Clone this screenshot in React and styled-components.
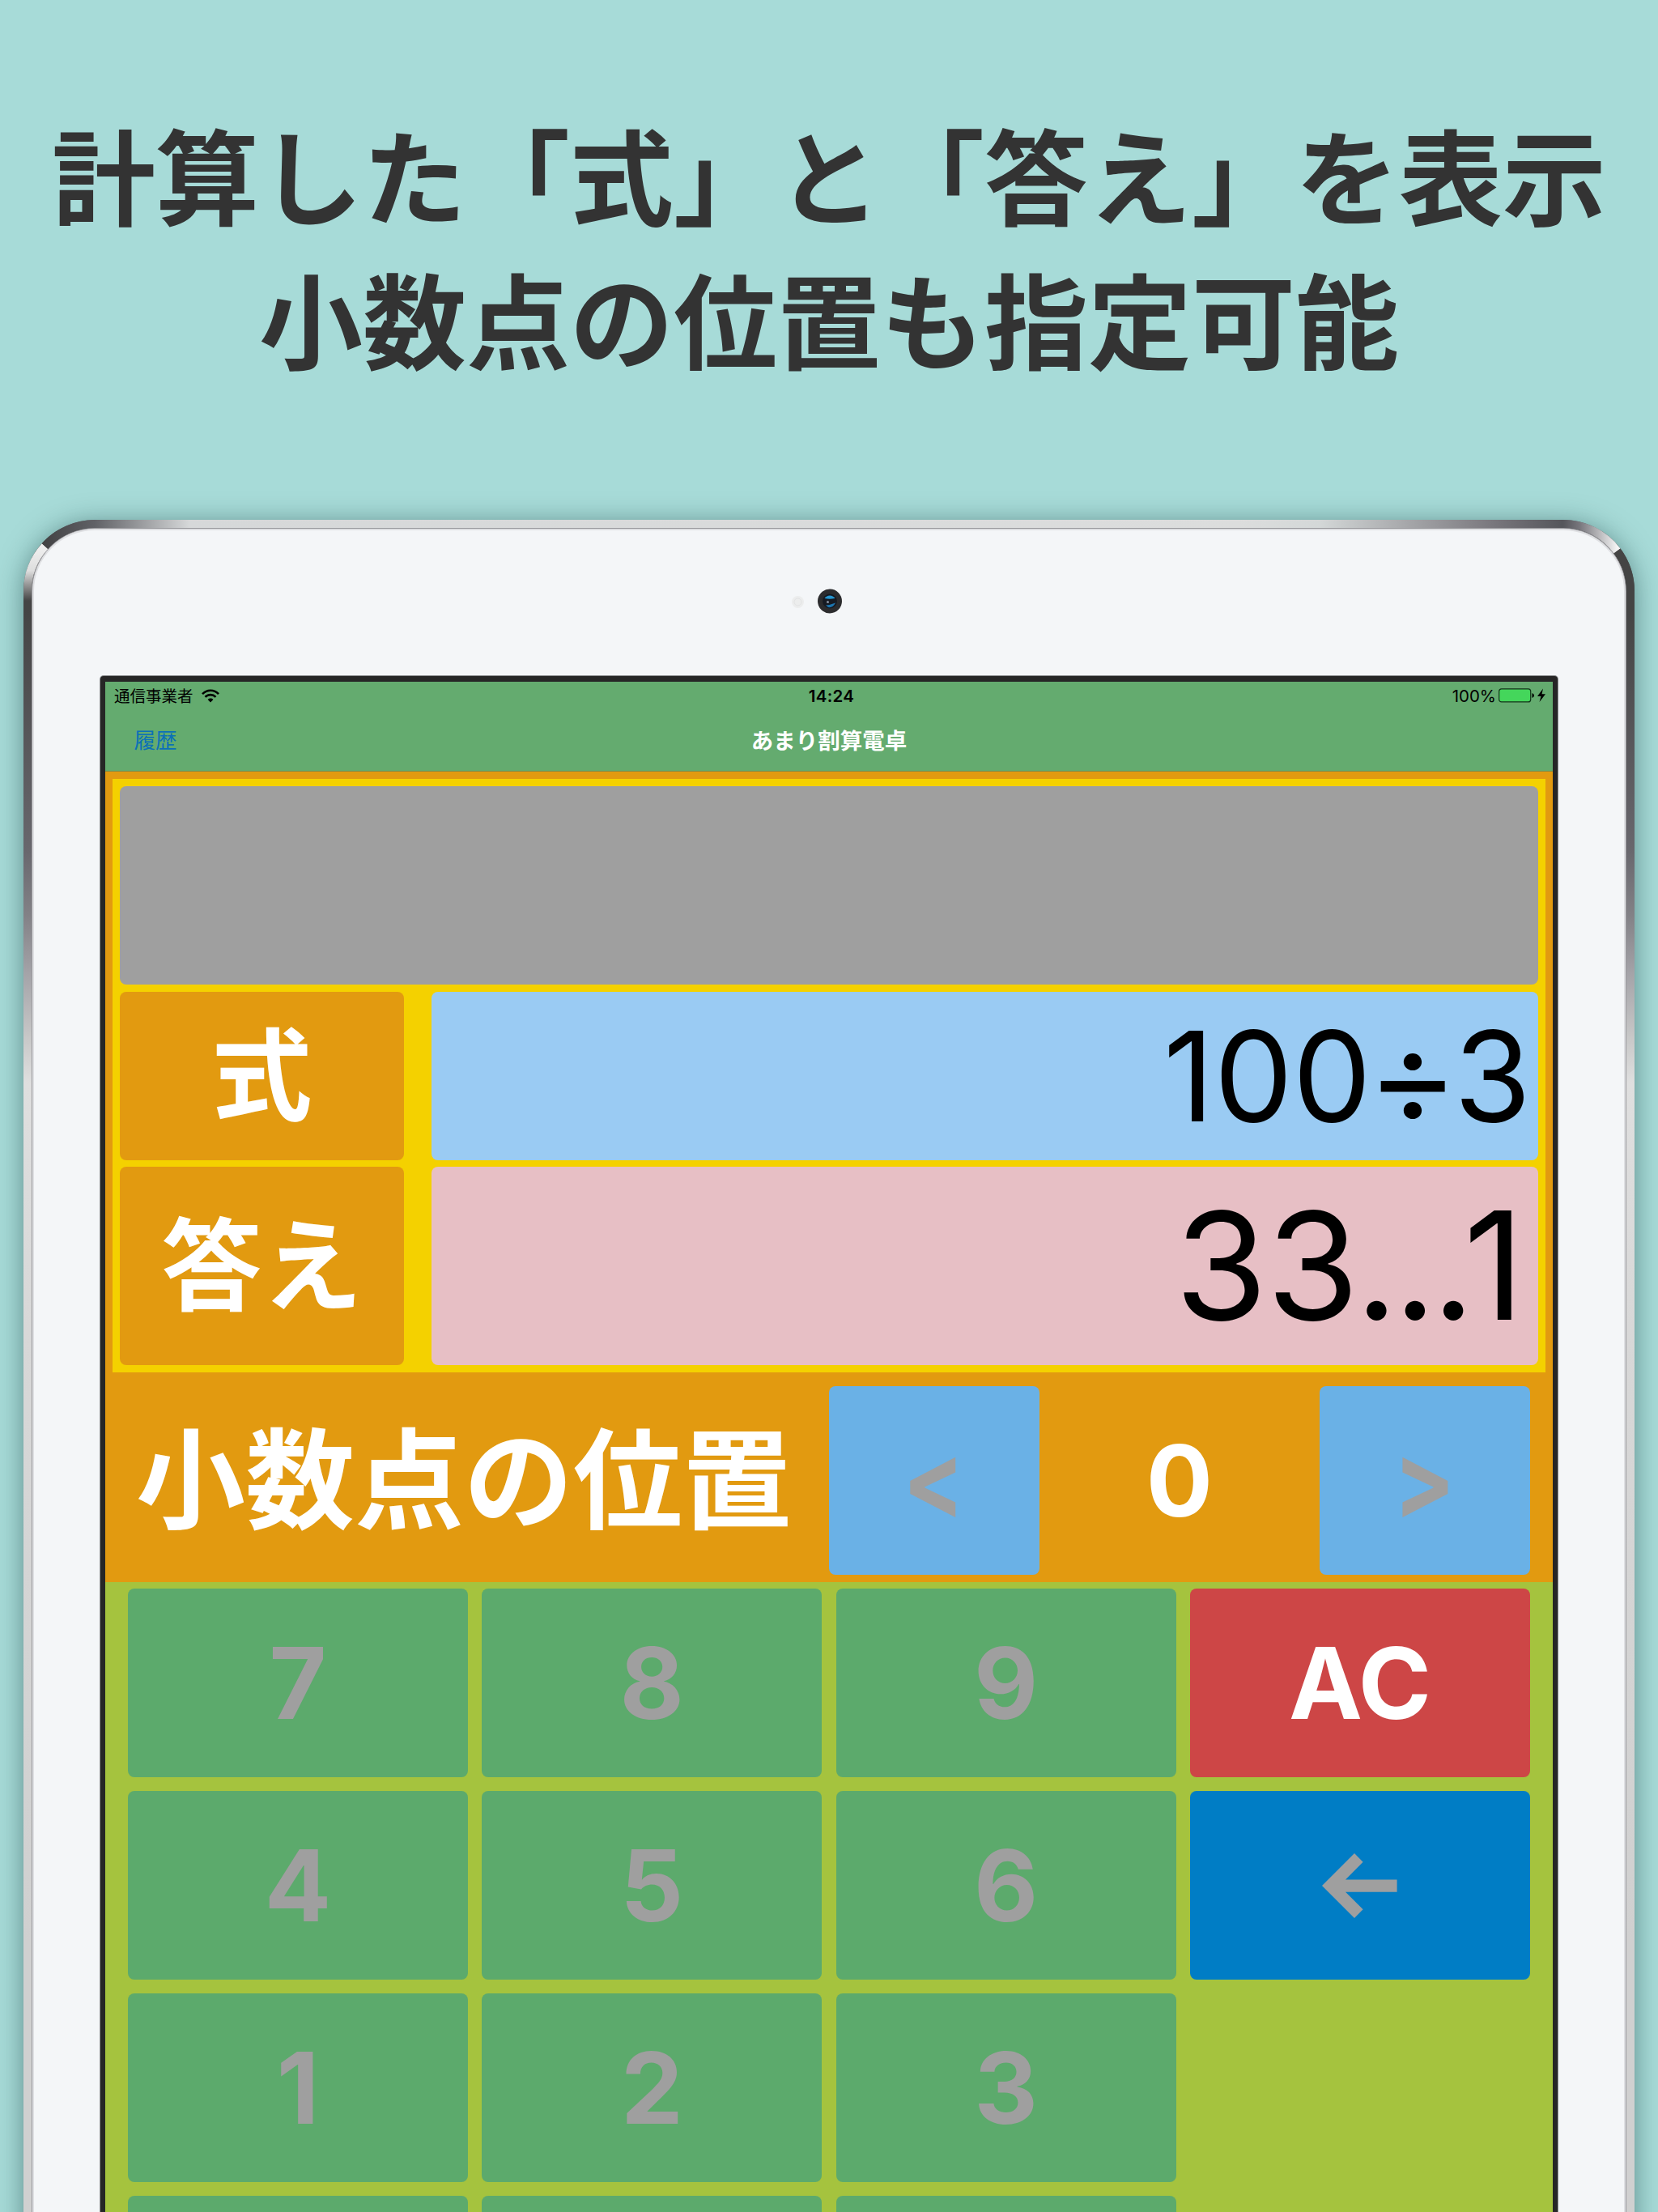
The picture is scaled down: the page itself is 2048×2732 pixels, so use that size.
import React from "react";
import styled, { createGlobalStyle } from "styled-components";

const Global = createGlobalStyle`
  * { box-sizing: border-box; }
  body { margin: 0; background: #a7dbd8; }
`;

const latin = `Inter, "Noto Sans CJK JP", sans-serif`;
const japanese = `"Noto Sans CJK JP", Inter, sans-serif`;

const Page = styled.main`
  width: 2048px;
  height: 2732px;
  overflow: hidden;
  background: #a7dbd8;
  font-family: ${latin};
  display: flex;
  flex-direction: column;
  align-items: center;
`;

const Headline = styled.h1`
  margin: 0;
  height: 642px;
  flex: none;
  padding-top: 125px;
  font: 700 128px/178px ${japanese};
  color: #333;
  text-align: center;
  white-space: nowrap;
`;

const Tablet = styled.section`
  position: relative;
  flex: none;
  width: 1990px;
  height: 2250px;
  padding: 10px 10px 0;
  border-radius: 88px 88px 0 0;
  background:
    linear-gradient(90deg, #606166 88px, #d6d8d9 205px, #dcdddd 1500px, #d4d8d8 1600px, #77757b 1820px, #55565b 1900px) 0 0 / 100% 12px no-repeat,
    linear-gradient(180deg, #444 0, #444 110px, #68676d 408px, #838287 490px, #a4a3a8 560px, #c8c8c8 640px, #dfdfdf 695px, #d8d8d8 1000px, #d0d0d0 1760px);
  box-shadow: 0 4px 32px rgba(20, 60, 60, 0.5);
`;

const Glass = styled.div`
  height: 100%;
  padding: 180px 82px 0;
  border: 1px solid #97979b;
  border-width: 1px 1px 0;
  border-radius: 78px 78px 0 0;
  background: #f4f6f8;
  box-shadow: inset 0 0 0 2px #dfe0e3;
`;

const Hardware = styled.svg`
  position: absolute;
  left: 0;
  top: 0;
  pointer-events: none;
`;

const Screen = styled.div`
  height: 2100px;
  margin: 2px 2px 0;
  border: 6px solid #262626;
  border-top-width: 7px;
  border-radius: 4px 4px 0 0;
  background: #a5c33e;
  box-shadow: 0 0 0 1px #8c8e90;
`;

const TopBar = styled.header`
  height: 111px;
  background: #64ab6f;
  border-bottom: 1px solid #7d8a4a;
`;

const StatusBar = styled.div`
  height: 34px;
  padding: 0 7px 0 11px;
  display: grid;
  grid-template-columns: 1fr auto 1fr;
  align-items: center;
  font-size: 20.5px;
  color: #000;
`;

const Carrier = styled.div`
  display: flex;
  align-items: center;
  gap: 10px;
  font: 400 19.5px/30px ${japanese};
`;

const Clock = styled.div`
  font-weight: 600;
  letter-spacing: 0.3px;
  transform: translateX(1px);
`;

const Power = styled.div`
  display: flex;
  align-items: center;
  justify-content: flex-end;
  gap: 3px;
`;

const NavBar = styled.nav`
  height: 73px;
  padding: 0 35.5px;
  display: grid;
  grid-template-columns: 1fr auto 1fr;
  align-items: center;
  font: 400 26.5px/60px ${japanese};
  color: #0b70b8;
`;

const NavTitle = styled.h2`
  margin: 0;
  font: 700 27.5px/60px ${japanese};
  color: #fff;
`;

const Display = styled.div`
  height: 742px;
  padding: 9px;
  background: #f4d100;
  border: 9px solid #e29a10;
  border-bottom: 0;
  display: grid;
  grid-template-columns: 351px 1fr;
  grid-template-rows: 245px 208px 245px;
  column-gap: 34px;
  row-gap: 8.5px;
`;

const Panel = styled.div`
  grid-column: ${(p) => (p.$wide ? "1 / -1" : "auto")};
  border-radius: 8px;
  background: ${(p) => p.$bg};
  display: flex;
  align-items: center;
  justify-content: center;
  color: #fff;
  font: 700 124px/1 ${japanese};
`;

const Caption = styled(Panel)`
  padding-bottom: 17px;
`;

const Value = styled(Panel)`
  justify-content: flex-end;
  padding-right: ${(p) => p.$inset}px;
  color: #000;
  font: 400 ${(p) => p.$size}px/1 ${latin};
  letter-spacing: ${(p) => p.$track}px;
`;

const Operator = styled.span`
  margin: 0 1px 0 -1px;
  transform: translateX(1px) scale(1.12, 1.06);
`;

const Dots = styled.span`
  margin: 0 -8px 0 -4px;
  letter-spacing: -6px;
`;

const DecimalRow = styled.div`
  height: 259px;
  padding: 17px 28px 9px 38px;
  background: #e29a10;
  display: grid;
  grid-template-columns: 856px 260px 1fr 260px;
  align-items: stretch;
  color: #fff;
`;

const DecimalLabel = styled.div`
  display: flex;
  align-items: center;
  padding-bottom: 18px;
  font: 700 135px/1 ${japanese};
  white-space: nowrap;
`;

const DecimalValue = styled.div`
  display: flex;
  align-items: center;
  justify-content: center;
  font-size: 122px;
  font-weight: 700;
`;

const Key = styled.button`
  border: 0;
  padding: 0;
  border-radius: 8px;
  display: flex;
  align-items: center;
  justify-content: center;
  background: ${(p) => p.$bg || "#5caa6c"};
  color: ${(p) => p.$fg || "#9f9f9f"};
  font: 700 122px/1 ${latin};
`;

const Chevron = styled.span`
  transform: translate(-1px, -2px) scale(0.92, 1.08);
`;

const Keypad = styled.div`
  padding: 8.4px 28px 0;
  display: grid;
  grid-template-columns: repeat(4, 420px);
  grid-auto-rows: 232.5px;
  column-gap: 17.33px;
  row-gap: 17.5px;
`;

const Wifi = () => (
  <svg width="22" height="17" viewBox="0 0 22 17" fill="none" stroke="#000" strokeWidth="2.6">
    <path d="M1 6.2C6.5.2 15.500.2 21 6.2" />
    <path d="M4.500 9.900C8.200 6.200 13.800 6.200 17.500 9.900" />
    <path d="M7.600 12.900C9.600 11 12.400 11 14.400 12.900L11 16.600Z" fill="#000" stroke="none" />
  </svg>
);

const Battery = () => (
  <svg width="60" height="18" viewBox="0 0 60 18">
    <rect x=".7" y=".9" width="39" height="16" rx="3" fill="#44d65b" stroke="#12351a" strokeWidth="1.200" />
    <path d="M41.500 6Q44 7 44 9T41.500 12Z" />
    <path d="M55 .500L48 10H52.500L50.500 17L58 7.300H53.500Z" />
  </svg>
);

const Camera = () => (
  <Hardware width="1990" height="200" viewBox="0 0 1990 200">
    <circle cx="956.500" cy="101.500" r="7.500" fill="#eceded" />
    <circle cx="956.500" cy="101.500" r="4.500" fill="none" stroke="#e2e3e4" />
    <circle cx="996" cy="100.500" r="15" fill="#2c2c2e" />
    <circle cx="996" cy="100.500" r="9" fill="#161a22" />
    <path d="M989.500 97Q992 93.500 996 93.500T1002.500 97Q996 98.500 989.500 97Z" fill="#2796cf" />
    <path d="M991 105.500Q997 105 1003 102.500Q1000 109 994 108Z" fill="#1d74ad" />
    <circle cx="993.500" cy="101.500" r="1.500" fill="#8790a0" />
  </Hardware>
);

const Corners = () => (
  <Hardware width="1990" height="160" viewBox="0 0 1990 160" fill="none" strokeWidth="10">
    <defs>
      <linearGradient id="lt" x1="0" y1="1" x2="0" y2="0">
        <stop offset="0" stopColor="#444" />
        <stop offset=".55" stopColor="#dedede" />
        <stop offset="1" stopColor="#f0f0f0" />
      </linearGradient>
      <linearGradient id="ld" x1="0" y1="0" x2="1" y2="0">
        <stop offset="0" stopColor="#434345" />
        <stop offset="1" stopColor="#606166" />
      </linearGradient>
      <linearGradient id="rt" x1="0" y1="0" x2="1" y2="0">
        <stop offset="0" stopColor="#55565b" />
        <stop offset=".3" stopColor="#77767c" />
        <stop offset="1" stopColor="#f4f4f4" />
      </linearGradient>
    </defs>
    <path d="M5 100V88A83 83 0 0 1 26.500 32.600" stroke="url(#lt)" />
    <path d="M26.500 32.600A83 83 0 0 1 88 5" stroke="url(#ld)" />
    <path d="M1902 5A83 83 0 0 1 1968.500 38.400" stroke="url(#rt)" />
    <path d="M1968.500 38.400A83 83 0 0 1 1985 88V100" stroke="#444" />
  </Hardware>
);

const BackArrow = () => (
  <svg width="93" height="82" viewBox="0 0 93 82" fill="#9f9f9f">
    <path d="M0 41L40 1L50.600 11.700L29 33.400H92.600V48.700H29L50.600 70.300L40 81Z" />
  </svg>
);

const rows = [
  ["7", "8", "9", "AC"],
  ["4", "5", "6", "back"],
  ["1", "2", "3", null],
  ["", "", "", null],
];

const renderKey = (label, i) => {
  if (label === null) return <span key={i} />;
  if (label === "AC") return <Key key={i} $bg="#cd4646" $fg="#fff">AC</Key>;
  if (label === "back") return <Key key={i} $bg="#007dc5"><BackArrow /></Key>;
  return <Key key={i}>{label}</Key>;
};

export default function App() {
  return (
    <Page>
      <Global />
      <Headline>
        計算した「式」と「答え」を表示
        <br />
        小数点の位置も指定可能
      </Headline>
      <Tablet>
        <Glass>
          <Screen>
            <TopBar>
              <StatusBar>
                <Carrier>通信事業者<Wifi /></Carrier>
                <Clock>14:24</Clock>
                <Power>100%<Battery /></Power>
              </StatusBar>
              <NavBar>
                <span>履歴</span>
                <NavTitle>あまり割算電卓</NavTitle>
                <span />
              </NavBar>
            </TopBar>
            <Display>
              <Panel $wide $bg="#9f9f9f" />
              <Caption $bg="#e29a10">式</Caption>
              <Value $bg="#9acbf3" $inset={9} $size={154} $track={0}>
                100<Operator>÷</Operator>3
              </Value>
              <Caption $bg="#e29a10">答え</Caption>
              <Value $bg="#e7bfc5" $inset={18} $size={185} $track={-1}>
                33<Dots>...</Dots>1
              </Value>
            </Display>
            <DecimalRow>
              <DecimalLabel>小数点の位置</DecimalLabel>
              <Key $bg="#6ab1e6"><Chevron>&lt;</Chevron></Key>
              <DecimalValue>0</DecimalValue>
              <Key $bg="#6ab1e6"><Chevron>&gt;</Chevron></Key>
            </DecimalRow>
            <Keypad>{rows.flat().map(renderKey)}</Keypad>
          </Screen>
        </Glass>
        <Corners />
        <Camera />
      </Tablet>
    </Page>
  );
}
